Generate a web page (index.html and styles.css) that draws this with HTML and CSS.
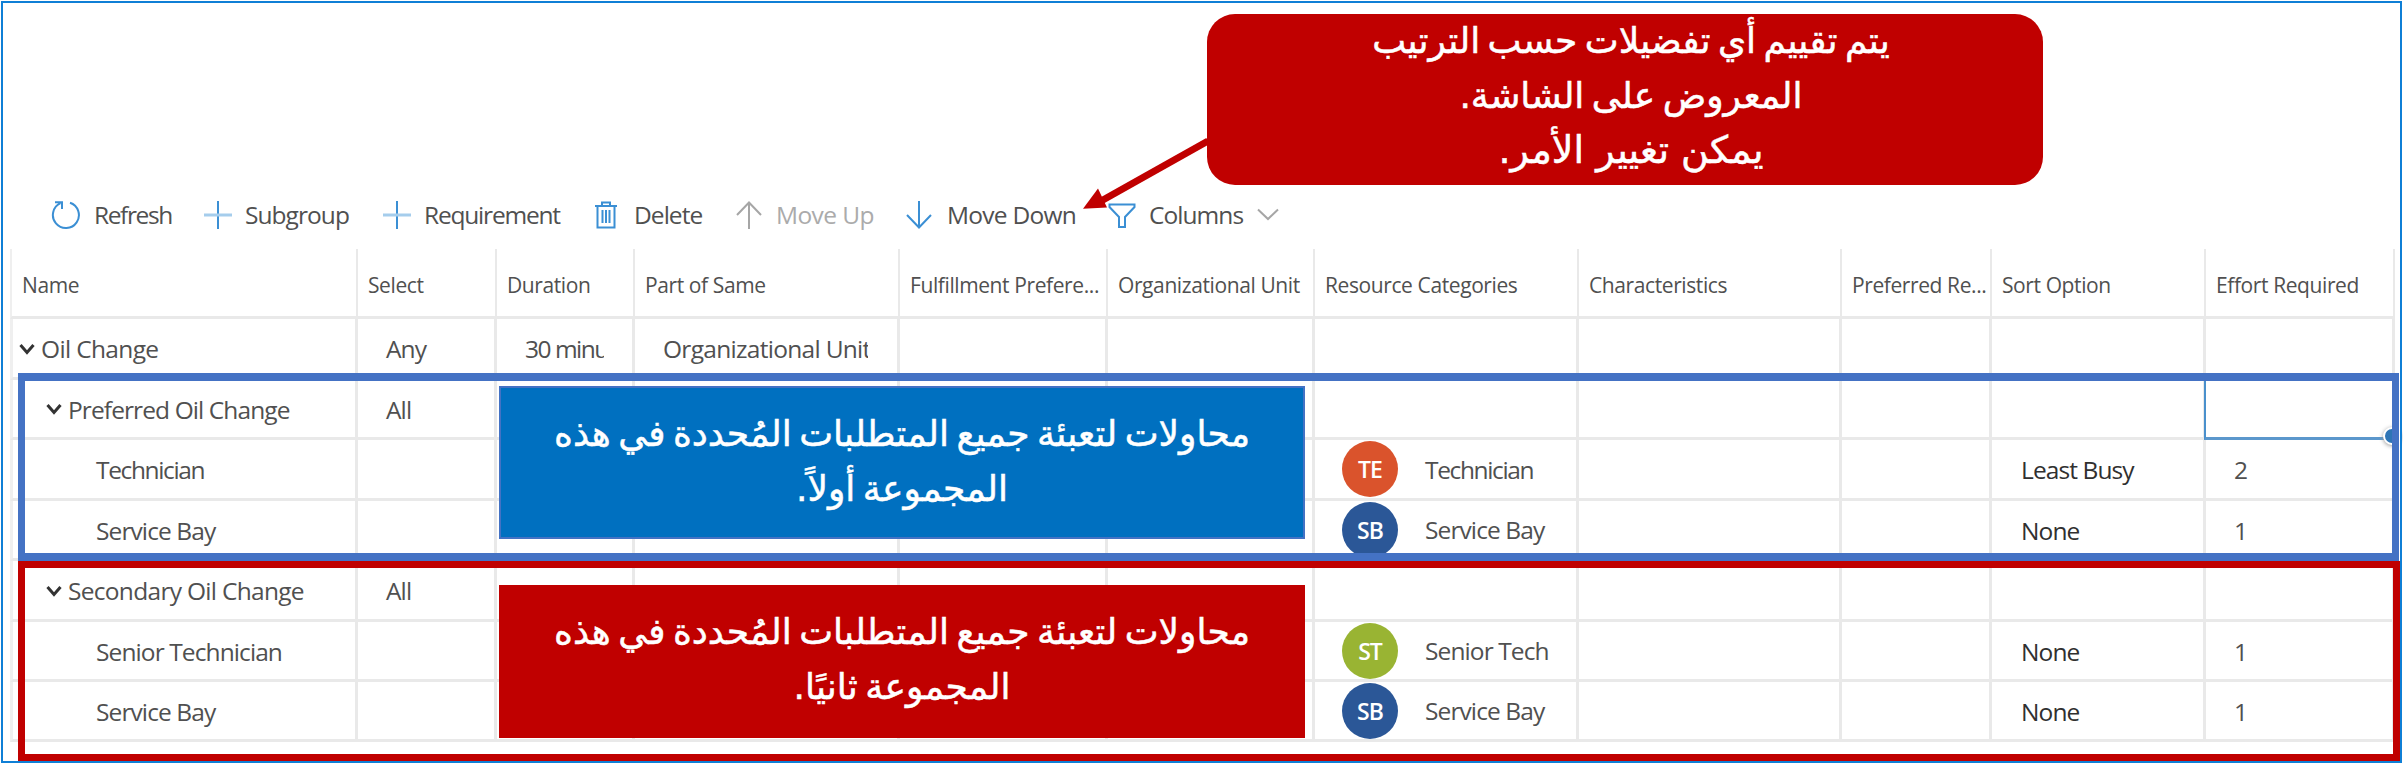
FILE: index.html
```
<!DOCTYPE html>
<html lang="ar">
<head>
<meta charset="utf-8">
<title>Requirement groups</title>
<link rel="stylesheet" href="styles.css">
</head>
<body>
<main class="frame">
  <nav class="toolbar">
    <span class="cmd refresh"><svg width="30" height="30" viewBox="0 0 30 30"><path class="ln" d="M19 2.700A13 13 0 1 1 9.500 3.200M4 2.200H11V9"/></svg><b>Refresh</b></span>
    <span class="cmd subgroup"><svg width="28" height="28" viewBox="0 0 28 28"><path class="ln" d="M14 0V28"/><path class="ln pale" d="M0 14H28"/></svg><b>Subgroup</b></span>
    <span class="cmd requirement"><svg width="28" height="28" viewBox="0 0 28 28"><path class="ln" d="M14 0V28"/><path class="ln pale" d="M0 14H28"/></svg><b>Requirement</b></span>
    <span class="cmd delete"><svg width="22" height="28" viewBox="0 0 22 28"><path class="ln" d="M0 5H22M7 5V1.500H15V5M2.500 5V26.500H19.500V5M7.500 9V22M11 9V22M14.500 9V22"/></svg><b>Delete</b></span>
    <span class="cmd up"><svg width="26" height="28" viewBox="0 0 26 28"><path class="ln" d="M13 28V1.500M1 14L13 1.500L25 14"/></svg><b>Move Up</b></span>
    <span class="cmd down"><svg width="26" height="28" viewBox="0 0 26 28"><path class="ln" d="M13 0V26.500M1 14L13 26.500L25 14"/></svg><b>Move Down</b></span>
    <span class="cmd columns"><svg width="28" height="28" viewBox="0 0 28 28"><path class="ln" d="M1.500 3.500H26.500V6L17 16V26H11V16L1.500 6Z"/></svg><b>Columns</b><svg class="chev" width="22" height="28" viewBox="0 0 22 28"><path class="ln" d="M1 8.500L11 18L21 8.500"/></svg></span>
  </nav>

  <section class="grid head">
    <span>Name</span><span>Select</span><span>Duration</span><span>Part of Same</span><span>Fulfillment Prefere...</span><span>Organizational Unit</span><span>Resource Categories</span><span>Characteristics</span><span>Preferred Re...</span><span>Sort Option</span><span>Effort Required</span>
  </section>
  <section class="grid row r0">
    <span class="lv0"><svg class="tw" width="16" height="12" viewBox="0 0 16 12"><path d="M1.500 2L8 9.500L14.500 2"/></svg>Oil Change</span><span class="val">Any</span><span class="val"><i class="clip minu">30 minu</i></span><span class="val"><i class="clip unit">Organizational Unit</i></span><span></span><span></span><span></span><span></span><span></span><span></span><span></span>
  </section>
  <section class="grid row r1">
    <span class="lv1"><svg class="tw" width="16" height="12" viewBox="0 0 16 12"><path d="M1.500 2L8 9.500L14.500 2"/></svg>Preferred Oil Change</span><span class="val">All</span><span></span><span></span><span></span><span></span><span></span><span></span><span></span><span></span><span class="selected"></span>
  </section>
  <section class="grid row r2">
    <span class="lv2 tight">Technician</span><span></span><span></span><span></span><span></span><span></span><span class="res tight"><em class="av te">TE</em>Technician</span><span></span><span></span><span class="val dark">Least Busy</span><span class="val">2</span>
  </section>
  <section class="grid row r3">
    <span class="lv2">Service Bay</span><span></span><span></span><span></span><span></span><span></span><span class="res"><em class="av sb">SB</em>Service Bay</span><span></span><span></span><span class="val dark">None</span><span class="val">1</span>
  </section>
  <section class="grid row r4">
    <span class="lv1 loose"><svg class="tw" width="16" height="12" viewBox="0 0 16 12"><path d="M1.500 2L8 9.500L14.500 2"/></svg>Secondary Oil Change</span><span class="val">All</span><span></span><span></span><span></span><span></span><span></span><span></span><span></span><span></span><span></span>
  </section>
  <section class="grid row r5">
    <span class="lv2">Senior Technician</span><span></span><span></span><span></span><span></span><span></span><span class="res"><em class="av st">ST</em>Senior Tech</span><span></span><span></span><span class="val dark">None</span><span class="val">1</span>
  </section>
  <section class="grid row r6">
    <span class="lv2">Service Bay</span><span></span><span></span><span></span><span></span><span></span><span class="res"><em class="av sb">SB</em>Service Bay</span><span></span><span></span><span class="val dark">None</span><span class="val">1</span>
  </section>

  <div class="handle"></div>
  <div class="outline blue"></div>
  <div class="outline red"></div>
  <svg class="arrow" width="130" height="80" viewBox="0 0 130 80"><path d="M128 11L22 70.500" stroke="#c00000" stroke-width="7"/><path d="M3 78.700L18 58.500L27 77.500Z" fill="#c00000"/></svg>
  <div class="note top" dir="rtl"><p>يتم تقييم أي تفضيلات حسب الترتيب</p><p>المعروض على الشاشة.</p><p class="wide">يمكن تغيير الأمر.</p></div>
  <div class="note first" dir="rtl"><p>محاولات لتعبئة جميع المتطلبات المُحددة في هذه</p><p>المجموعة أولاً.</p></div>
  <div class="note second" dir="rtl"><p>محاولات لتعبئة جميع المتطلبات المُحددة في هذه</p><p>المجموعة ثانيًا.</p></div>
</main>
</body>
</html>
```
FILE: styles.css
```
* { box-sizing: border-box; }
body { margin: 0; background: #fff; font-family: "Open Sans", "Noto Sans", sans-serif; color: #505050; }
.frame { position: relative; width: 2403px; height: 764px; padding: 198px 8px 0 10px; overflow: hidden; }
.frame::after { content: ""; position: absolute; inset: 1px; border: 2px solid #0f7fd6; }

.toolbar { display: flex; height: 51px; padding-left: 41px; font-size: 24.5px; letter-spacing: -0.95px; }
.cmd { display: flex; align-items: center; height: 33px; white-space: nowrap; }
.cmd b { font-weight: 400; margin-left: -1px; }
.cmd svg { flex: none; }
.ln { fill: none; stroke: #3b8fd4; stroke-width: 2; }
.pale { stroke: #a5cdec; stroke-width: 3; }
.refresh { width: 153px; gap: 14px; letter-spacing: -1.4px; }
.subgroup { width: 179px; gap: 14px; }
.requirement { width: 212px; gap: 14px; letter-spacing: -1.2px; }
.delete { width: 141px; gap: 18px; }
.up { width: 170px; gap: 15px; color: #ababab; letter-spacing: -0.6px; }
.up .ln, .chev .ln { stroke: #a6a6a6; }
.down { width: 202px; gap: 16px; letter-spacing: -0.75px; }
.columns { gap: 14px; }

.grid { display: grid; grid-template-columns: 348px 139px 138px 265px 208px 207px 264px 263px 150px 214px 189px; width: 2385px; white-space: nowrap; }
.grid > span { display: flex; align-items: center; overflow: hidden; border-right: 3px solid #e9e9e9; border-bottom: 3px solid #e9e9e9; }
.grid > span:first-child { border-left: 3px solid #efefef; }
.head { height: 70px; font-size: 21px; letter-spacing: -0.4px; }
.head > span { padding: 5px 0 0 10px; border-right-width: 2px; }
.head > span:first-child { padding-left: 10px; border-left-width: 2px; }
.row { font-size: 24.5px; letter-spacing: -0.9px; }
.row > span { padding-top: 1px; }
.r0, .r2, .r4 { height: 61px; }
.r1, .r3, .r5, .r6 { height: 60px; }
.tw { flex: none; margin-right: 6px; }
.tw path { fill: none; stroke: #333; stroke-width: 3; }
.lv0 { padding-left: 6px; letter-spacing: -0.65px; }
.lv1 { padding-left: 33px; }
.lv2 { padding-left: 83px; }
.tight { letter-spacing: -1.35px; }
.loose { letter-spacing: -0.7px; }
.val { padding-left: 28px; }
.dark { padding-left: 29px; color: #303030; }
.clip { font-style: normal; overflow: hidden; }
.minu { width: 79px; letter-spacing: -1.5px; }
.unit { width: 205px; letter-spacing: -0.7px; }
.res { padding-left: 27px; gap: 27px; }
.row > .res { padding-top: 0; }
.av { display: flex; align-items: center; justify-content: center; width: 56px; height: 56px; flex: none; border-radius: 50%; color: #fff; font-style: normal; font-weight: 600; font-size: 23px; letter-spacing: -1px; }
.te { background: #da532c; }
.sb { background: #2b5797; }
.st { background: #99b433; }
.grid > .selected { margin-left: -2px; border-left: 2px solid #4a90cc; border-bottom-color: #5b97cc; }
.handle { position: absolute; left: 2383px; top: 427px; width: 18px; height: 18px; border-radius: 50%; border: 2px solid #fff; background: #2e75b6; box-shadow: 0 1px 4px #999; }

.outline { position: absolute; left: 18px; }
.blue { top: 373px; width: 2381px; height: 188px; border: 8px solid #4472c4; border-width: 8px 7px; box-shadow: 2px 0 0 #fff; }
.red { top: 561px; width: 2382px; height: 200px; border: 7px solid #c00000; }
.arrow { position: absolute; left: 1080px; top: 130px; }
.note { position: absolute; color: #fff; font-family: "DejaVu Sans", sans-serif; font-size: 36px; word-spacing: -4px; -webkit-text-stroke: 0.5px #fff; }
.note p { margin: 0; height: 55px; line-height: 55px; white-space: nowrap; display: flex; justify-content: center; }
.note .wide { font-size: 38px; word-spacing: 0; }
.top { left: 1207px; top: 14px; width: 836px; height: 171px; border-radius: 28px; background: #c00000; padding-left: 12px; }
.top p { position: relative; top: -1px; }
.first, .second { left: 499px; width: 806px; height: 153px; }
.first { top: 386px; padding-top: 18px; background: #0070c0; border: 2px solid #4472c4; }
.second { top: 585px; padding-top: 19px; background: #c00000; }
```
